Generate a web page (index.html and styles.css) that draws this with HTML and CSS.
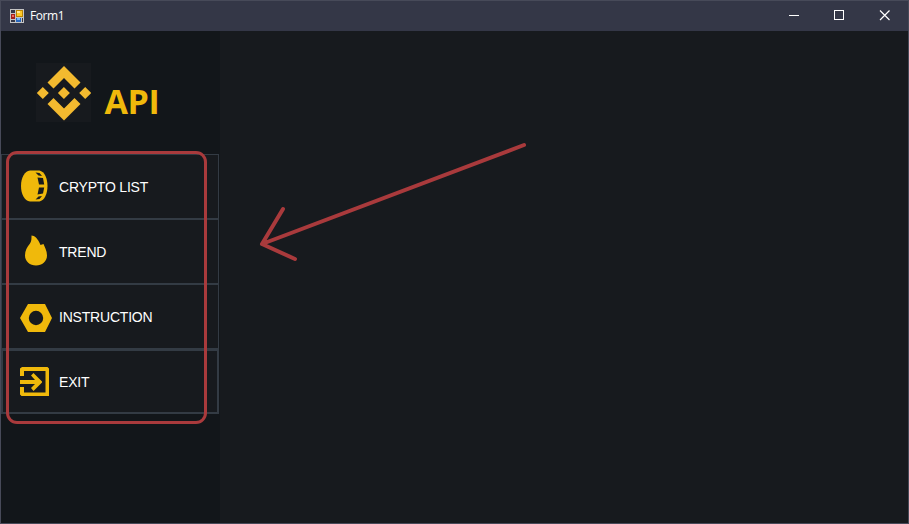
FILE: index.html
```html
<!DOCTYPE html>
<html lang="en">
<head>
<meta charset="utf-8">
<title>Form1</title>
<link rel="stylesheet" href="styles.css">
</head>
<body>
<div class="window">
  <header class="titlebar">
    <svg class="app-icon" width="14" height="14" viewBox="0 0 14 14" shape-rendering="crispEdges">
      <path fill="#c4c4c4" d="M0 0h14v14H0z"/>
      <path fill="#343747" d="M1 1h4v3H1zM1 11h4v2H1zM12 9h1v4h-1z"/>
      <path fill="#a3201c" d="M1 5h4v5H1z"/><path fill="#f06a5a" d="M2 6h2v2H2z"/>
      <path fill="#b98300" d="M6 1h7v7H6z"/><path fill="#ffc928" d="M7 2h5v5H7z"/><path fill="#ffe89a" d="M7 2h3v2H7z"/>
      <path fill="#2867bd" d="M6 9h5v4H6z"/><path fill="#78b4f5" d="M7 9h3v2H7z"/>
    </svg>
    <span class="title">Form1</span>
    <div class="controls">
      <svg width="45" height="30"><path d="M18 14.5h10"/></svg>
      <svg width="45" height="30"><path d="M18.5 9.5h9v9h-9z"/></svg>
      <svg width="47" height="30"><path class="close" d="M19 9.500l9.500 9.500M28.500 9.500L19 19"/></svg>
    </div>
  </header>
  <div class="body">
    <aside class="sidebar">
      <div class="brand">
        <svg class="logo" width="55" height="59" viewBox="0 0 55 59">
          <path d="M28 3L44.500 19.500 38.500 25.500 28 15 17.500 25.500 11.500 19.500zM28 57.500L44.500 41 38.500 35 28 45.500 17.500 35 11.500 41zM6.800 24l6 6-6 6-6-6zM27.900 24l6 6-6 6-6-6zM49.200 24l6 6-6 6-6-6z"/>
        </svg>
        <span class="brand-name">API</span>
      </div>
      <nav class="menu">
        <button class="item">
          <svg class="icon" width="32" height="34" viewBox="0 0 32 34">
            <path d="M10 0.500h9.500c5 1 8 8 8 15.500s-3 14.500-8 15.500H10C4.500 31 1 24 1 16S4.500 1 10 0.500z"/>
            <path class="cut" d="M15.500 2.500l4 0.500 2.500 3-3.500-0.500zM17.500 7.500l5.500 0.500 1.200 6.500H19zM19 17.500h5.200L23 23.500l-5.500 1zM18.500 26.500l3.500-0.500-2.500 3-4 0.500z"/>
          </svg>
          <span>CRYPTO LIST</span>
        </button>
        <button class="item">
          <svg class="icon" width="32" height="34" viewBox="0 0 32 34">
            <path d="M11.500 0.500c3 0 6.500 3 9 9.500l3-1c1 3 3.500 6.500 3.500 11.500 0 6-5 10-11 10S5 26.500 5 20.500c0-5 2-8.500 5-12 1.500-2 1.500-5 1.500-8z"/>
          </svg>
          <span>TREND</span>
        </button>
        <button class="item">
          <svg class="icon" width="32" height="34" viewBox="0 0 32 34">
            <path fill-rule="evenodd" d="M8 4h17l7 14-7 14H8L0 18zM16 10.800a7.200 7.200 0 1 0 0 14.400 7.200 7.200 0 1 0 0-14.400z"/>
          </svg>
          <span>INSTRUCTION</span>
        </button>
        <button class="item selected">
          <svg class="icon" width="32" height="34" viewBox="0 0 32 34">
            <path d="M2 2h25.500L29 3.500V31H1.500L0 29.500V22h4v5.500h21.500V6H4v5H0V3.500zM0 15h15l-4-4.500L13.500 8l8.500 8.500v1L13.500 26 11 23l4-4H0z"/>
          </svg>
          <span>EXIT</span>
        </button>
      </nav>
    </aside>
    <main class="content"></main>
  </div>
  <svg class="annotation" width="909" height="524" viewBox="0 0 909 524">
    <rect x="7.500" y="152.500" width="198" height="270" rx="9.500" stroke-width="3"/>
    <path d="M524 145L262 244M283 209L262 244L295 259" stroke-width="4"/>
  </svg>
</div>
</body>
</html>
```
FILE: styles.css
```css
* {
  box-sizing: border-box;
}

body {
  margin: 0;
  background: #171a1e;
}

.window {
  position: relative;
  display: flex;
  flex-direction: column;
  width: 909px;
  height: 524px;
  border: 1px solid #474a59;
  overflow: hidden;
}

.titlebar {
  display: flex;
  align-items: center;
  flex: none;
  height: 30px;
  padding-left: 9px;
  background: #343747;
}

.app-icon {
  margin-top: -1px;
}

.title {
  margin: -1px 0 0 6px;
  font: 12px "Open Sans", "Noto Sans", sans-serif;
  letter-spacing: -0.4px;
  color: #fff;
}

.controls {
  display: flex;
  margin-left: auto;
}

.controls path {
  fill: none;
  stroke: #fff;
  shape-rendering: crispEdges;
}

.controls .close {
  stroke-width: 1.2;
  shape-rendering: auto;
}

.body {
  display: flex;
  flex: 1;
}

.sidebar {
  width: 219px;
  background: #12161a;
}

.content {
  flex: 1;
  background: #171a1e;
}

.brand {
  display: flex;
  height: 123px;
  padding: 32px 0 0 35px;
}

.logo {
  background: #171a1e;
  fill: #f3ba2f;
}

.brand-name {
  margin: 15px 0 0 13.5px;
  font: bold 34px/46px "Open Sans", "Noto Sans", sans-serif;
  letter-spacing: -0.4px;
  color: #f0b90b;
}

.menu {
  display: flex;
  flex-direction: column;
  width: 218px;
}

.item {
  display: flex;
  align-items: center;
  height: 65px;
  padding: 0 0 0 18px;
  border: 1px solid #333b44;
  background: #171a1e;
  color: #fff;
  font: 14px "Liberation Sans", Arial, sans-serif;
  letter-spacing: -0.2px;
  text-align: left;
}

.item.selected {
  padding-left: 17px;
  border-width: 2px;
}

.icon {
  flex: none;
  margin-right: 7px;
  fill: #f0b90b;
}

.icon .cut {
  fill: #171a1e;
}

.annotation {
  position: absolute;
  top: -1px;
  left: -1px;
  fill: none;
  stroke: #a93a3c;
  stroke-linecap: round;
  stroke-linejoin: round;
  pointer-events: none;
}
```
